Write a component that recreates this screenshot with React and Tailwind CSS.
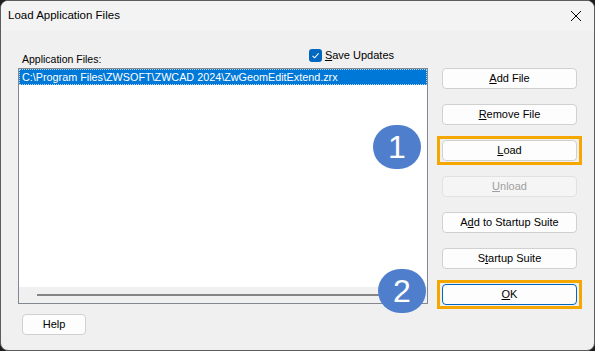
import { useState } from "react";

function Btn({ children, disabled, primary }) {
    return (
        <button
            className={
                disabled
                    ? "block h-[21px] w-full rounded-[4px] border border-[#e1e1e1] bg-[#f5f5f5] text-[11px] text-[#a0a0a0]"
                    : primary
                    ? "block h-[21px] w-full rounded-[4px] border border-[#0067c0] bg-[#fdfdfd] text-[11px] text-black"
                    : "block h-[21px] w-full rounded-[4px] border border-[#d0d0d0] bg-[#fdfdfd] text-[11px] text-black"
            }
        >{children}</button>
    );
}

function Marked({ children }) {
    return (
        <div className="relative">
            {children}
            <div className="pointer-events-none absolute -inset-x-[5px] -inset-y-[4px] border-[3px] border-[#f5a700]" />
        </div>
    );
}

function Badge({ n, className }) {
    return (
        <div className={"absolute flex h-[44px] w-[48px] items-center justify-center rounded-full bg-[#4f7fcc] text-[32px] leading-none text-white " + className}>
            {n}
        </div>
    );
}

export default function App() {
    const [saveUpdates, setSaveUpdates] = useState(true);

    return (
        <div className="h-[351px] w-[595px] bg-[#1c1c1c] font-['Liberation_Sans',Arial,sans-serif]">
            <div className="relative flex h-full w-full flex-col overflow-hidden rounded-[8px] border border-[#5c5c5c] bg-[#f0f0f0]">
                {/* title bar */}
                <div className="flex h-[30px] shrink-0 items-center justify-between bg-[#f3f3f3] pl-[7px] pr-[12px]">
                    <span className="text-[11.5px] text-black">Load Application Files</span>
                    <svg width="12" height="12" viewBox="0 0 12 12" className="text-black">
                        <path d="M1 1 L11 11 M11 1 L1 11" stroke="currentColor" strokeWidth="1" fill="none" />
                    </svg>
                </div>

                <div className="flex gap-[14px] pl-[17px] pt-[13px]">
                    {/* left column */}
                    <div className="flex w-[410px] flex-col">
                        <div className="flex h-[24px] items-start">
                            <span className="mt-[8px] pl-[4px] text-[10.5px] text-black">Application Files:</span>
                            <label className="ml-auto mr-[34px] mt-[3px] flex items-center gap-[3px] text-[11px] text-black">
                                <span
                                    onClick={() => setSaveUpdates(!saveUpdates)}
                                    className="flex h-[13px] w-[13px] items-center justify-center rounded-[3px] bg-[#0067c0]"
                                >
                                    {saveUpdates && (
                                        <svg width="9" height="9" viewBox="0 0 9 9">
                                            <path d="M1.5 4.8 L3.6 6.8 L7.6 2.3" stroke="white" strokeWidth="1.1" fill="none" />
                                        </svg>
                                    )}
                                </span>
                                <span><u>S</u>ave Updates</span>
                            </label>
                        </div>
                        <div className="flex h-[236px] flex-col border border-[#828790] bg-white">
                            <div className="flex-1">
                                <div className="flex h-[16px] items-center border border-dotted border-[#b7d6f2] bg-[#0078d7] pl-[2px] text-[10.8px] text-white">
                                    C:\Program Files\ZWSOFT\ZWCAD 2024\ZwGeomEditExtend.zrx
                                </div>
                            </div>
                            <div className="flex h-[16px] items-center bg-[#f0f0f0] pl-[18px] pr-[4px]">
                                <div className="h-[2px] flex-1 bg-[#858585]" />
                            </div>
                        </div>
                        <div className="pl-[4px] pt-[10px]">
                            <button className="block h-[21px] w-[64px] rounded-[4px] border border-[#d0d0d0] bg-[#fdfdfd] text-[11px] text-black">Help</button>
                        </div>
                    </div>

                    {/* right column */}
                    <div className="flex w-[135px] flex-col gap-[15px] pt-[24px]">
                        <Btn><u>A</u>dd File</Btn>
                        <Btn><u>R</u>emove File</Btn>
                        <Marked><Btn><u>L</u>oad</Btn></Marked>
                        <Btn disabled><u>U</u>nload</Btn>
                        <Btn>A<u>d</u>d to Startup Suite</Btn>
                        <Btn>S<u>t</u>artup Suite</Btn>
                        <Marked><Btn primary><u>O</u>K</Btn></Marked>
                    </div>
                </div>

                <Badge n="1" className="left-[372px] top-[124px]" />
                <Badge n="2" className="left-[377px] top-[268px]" />
            </div>
        </div>
    );
}
